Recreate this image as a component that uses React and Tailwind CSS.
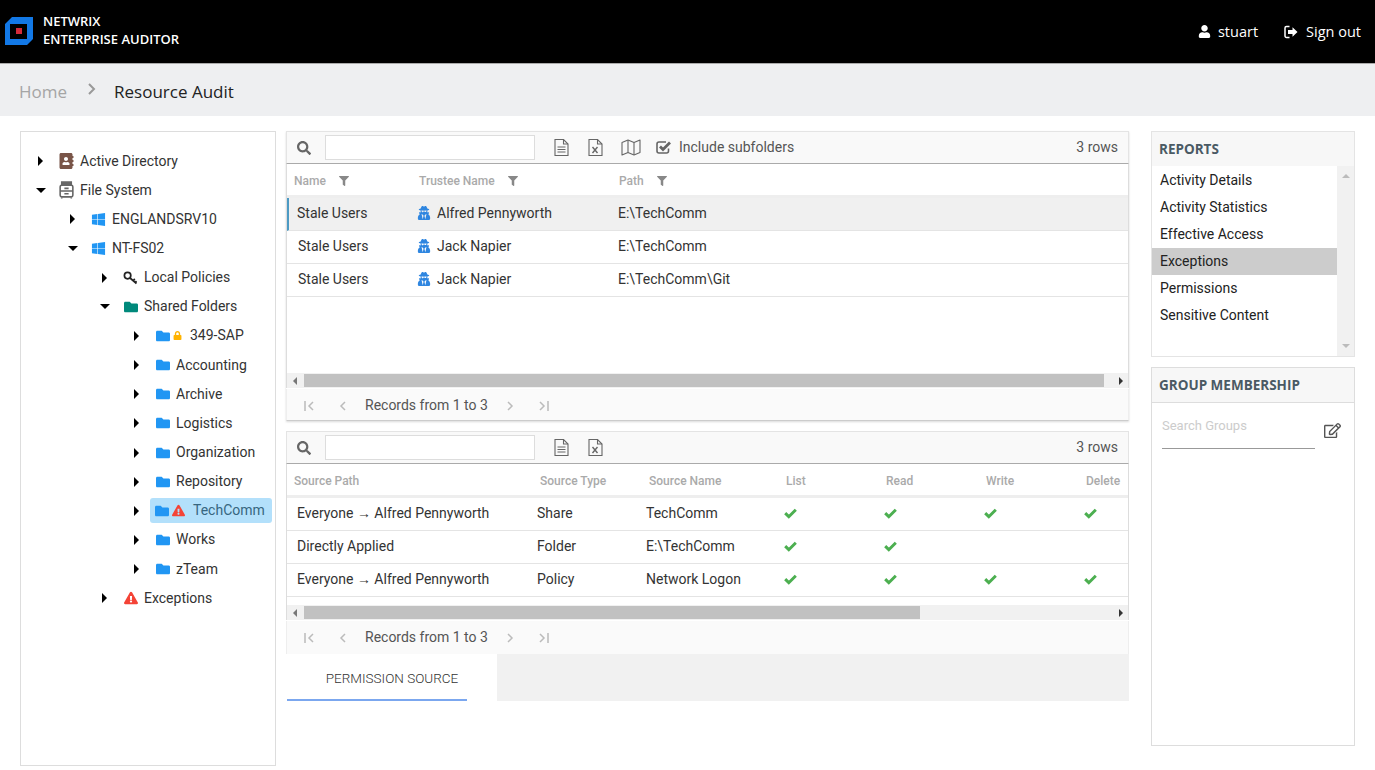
import React from 'react';
import {
  FaUser, FaFolder, FaWindows, FaExclamationTriangle, FaLock, FaSearch, FaFilter,
  FaRegEdit, FaAddressBook, FaUserSecret,
} from 'react-icons/fa';

// Tree data: level drives the indent
const TREE = [
  { label: 'Active Directory', level: 0, icon: 'book' },
  { label: 'File System', level: 0, icon: 'cabinet', open: true },
  { label: 'ENGLANDSRV10', level: 1, icon: 'windows' },
  { label: 'NT-FS02', level: 1, icon: 'windows', open: true },
  { label: 'Local Policies', level: 2, icon: 'key' },
  { label: 'Shared Folders', level: 2, icon: 'teal', open: true },
  { label: '349-SAP', level: 3, icon: 'folder', badge: 'lock' },
  { label: 'Accounting', level: 3, icon: 'folder' },
  { label: 'Archive', level: 3, icon: 'folder' },
  { label: 'Logistics', level: 3, icon: 'folder' },
  { label: 'Organization', level: 3, icon: 'folder' },
  { label: 'Repository', level: 3, icon: 'folder' },
  { label: 'TechComm', level: 3, icon: 'folder', badge: 'warn', selected: true },
  { label: 'Works', level: 3, icon: 'folder' },
  { label: 'zTeam', level: 3, icon: 'folder' },
  { label: 'Exceptions', level: 2, icon: 'warn' },
];

const INDENT = ['pl-[15px]', 'pl-[47px]', 'pl-[79px]', 'pl-[111px]'];

const TRUSTEES = [
  { name: 'Stale Users', trustee: 'Alfred Pennyworth', path: 'E:\\TechComm', active: true },
  { name: 'Stale Users', trustee: 'Jack Napier', path: 'E:\\TechComm' },
  { name: 'Stale Users', trustee: 'Jack Napier', path: 'E:\\TechComm\\Git' },
];

const SOURCES = [
  { path: 'Everyone → Alfred Pennyworth', type: 'Share', name: 'TechComm', perms: [1, 1, 1, 1] },
  { path: 'Directly Applied', type: 'Folder', name: 'E:\\TechComm', perms: [1, 1, 0, 0] },
  { path: 'Everyone → Alfred Pennyworth', type: 'Policy', name: 'Network Logon', perms: [1, 1, 1, 1] },
];

const REPORTS = ['Activity Details', 'Activity Statistics', 'Effective Access', 'Exceptions', 'Permissions', 'Sensitive Content'];

const Logo = () => (
  <svg width="28" height="28" viewBox="0 0 28 28" className="shrink-0">
    <path d="M7 0H28V22L22 28H0V7ZM5 7V22H22V7Z" fill="#1278e6" fillRule="evenodd" />
    <rect x="11" y="11" width="6" height="6" fill="#d52b3a" />
  </svg>
);

const SignOutIcon = () => (
  <svg width="14" height="14" viewBox="0 0 14 14">
    <path d="M5.5 1.5H2.5a1.5 1.5 0 0 0-1.5 1.5v8a1.5 1.5 0 0 0 1.5 1.5h3" fill="none" stroke="#fff" strokeWidth="1.5" />
    <path d="M4 5h4.5V2.2L13.5 7l-5 4.8V9H4z" fill="#fff" />
  </svg>
);

const CabinetIcon = () => (
  <svg width="15" height="18" viewBox="0 0 14 17" fill="none" stroke="#666" strokeWidth="1.5">
    <path d="M2.5 1h9v3h-9z" fill="#666" />
    <rect x="1" y="4" width="12" height="11" rx="1.5" />
    <path d="M1 9.5h12M5 7h4M5 12h4" />
    <path d="M2.5 15.5v1M11.5 15.5v1" />
  </svg>
);

const KeyIcon = () => (
  <svg width="15" height="14" viewBox="0 0 15 14" fill="none" stroke="#222" strokeWidth="1.7">
    <circle cx="4.6" cy="4.6" r="3.2" />
    <path d="M7 7l6.5 5.5M10.2 9.6l1.6-1.7M12.3 11.3l1.2-1.2" />
  </svg>
);

const CheckIcon = () => (
  <svg width="13" height="11" viewBox="0 0 13 11" fill="none" stroke="#4caf50" strokeWidth="3">
    <path d="M1.2 5.2l3.6 3.5L11.8 1.8" />
  </svg>
);

const TreeIcon = ({ type }) => {
  if (type === 'book') return <FaAddressBook className="text-[16px] text-[#795548]" />;
  if (type === 'cabinet') return <CabinetIcon />;
  if (type === 'windows') return <FaWindows className="text-[15px] text-[#2196f3]" />;
  if (type === 'key') return <KeyIcon />;
  if (type === 'teal') return <FaFolder className="text-[14px] text-[#00897b]" />;
  if (type === 'warn') return <FaExclamationTriangle className="text-[14px] text-[#f44336]" />;
  return <FaFolder className="text-[14px] text-[#2196f3]" />;
};

const TreeRow = ({ item }) => (
  <div className={`flex h-[29.15px] items-center ${INDENT[item.level]}`}>
    <span className="flex w-[9px] justify-center">
      {item.open ? (
        <span className="h-0 w-0 border-x-[5px] border-t-[5px] border-x-transparent border-t-black" />
      ) : (
        <span className="h-0 w-0 border-y-[5px] border-l-[5px] border-y-transparent border-l-black" />
      )}
    </span>
    {item.selected ? (
      <div className="ml-[9px] flex h-[25px] w-[122px] items-center rounded-[3px] bg-[#b3e0fb] pl-[5px]">
        <TreeIcon type={item.icon} />
        <FaExclamationTriangle className="ml-[3px] text-[13px] text-[#f44336]" />
        <span className="ml-[8px] text-[#37667f]">{item.label}</span>
      </div>
    ) : (
      <div className="ml-[14px] flex items-center">
        <span className="flex w-[15px] justify-center">
          <TreeIcon type={item.icon} />
        </span>
        {item.badge === 'lock' && <FaLock className="ml-[3px] text-[9px] text-[#ffb300]" />}
        <span className={item.badge === 'lock' ? 'ml-[8px]' : 'ml-[6px]'}>{item.label}</span>
      </div>
    )}
  </div>
);

const DocIcon = () => (
  <svg width="15" height="17" viewBox="0 0 15 17" fill="none" stroke="#666" strokeWidth="1.1">
    <path d="M1 .5h8.5L14 5v11.5H1z" />
    <path d="M9.5.5V5H14M3.5 8h8M3.5 10.5h8M3.5 13h8" />
  </svg>
);

const ExcelIcon = () => (
  <svg width="15" height="17" viewBox="0 0 15 17" fill="none" stroke="#666" strokeWidth="1.1">
    <path d="M1 .5h8.5L14 5v11.5H1z" />
    <path d="M9.5.5V5H14" />
    <path d="M4.5 8l5 6M9.5 8l-5 6" strokeWidth="1.4" />
  </svg>
);

const MapIcon = () => (
  <svg width="20" height="17" viewBox="0 0 20 17" fill="none" stroke="#666" strokeWidth="1.1" strokeLinejoin="round">
    <path d="M1 3.5L7 1l6 2.5L19 1v12.5L13 16l-6-2.5L1 16z" />
    <path d="M7 1v12.5M13 3.5V16" />
  </svg>
);

const CheckedBox = () => (
  <svg width="16" height="15" viewBox="0 0 16 15" fill="none">
    <path d="M12.5 8.5V11a2 2 0 0 1-2 2H3a2 2 0 0 1-2-2V4a2 2 0 0 1 2-2h7" stroke="#666" strokeWidth="1.6" />
    <path d="M4 6.5l3 3L14 2.5" stroke="#666" strokeWidth="2.8" />
  </svg>
);

const Toolbar = ({ children }) => (
  <div className="flex h-[33px] items-center border border-[#e4e4e4] border-b-[#aaa] bg-[#f9f9f9] pr-[10px] text-[#555]">
    <FaSearch className="ml-[10px] text-[14px] text-[#666]" />
    <div className="ml-[14px] h-[25px] w-[210px] border border-[#ddd] bg-white" />
    <span className="ml-[19px] flex"><DocIcon /></span>
    <span className="ml-[19px] flex"><ExcelIcon /></span>
    {children}
    <span className="ml-auto">3 rows</span>
  </div>
);

const Scrollbar = ({ thumb }) => (
  <div className="flex h-[15px] items-center bg-[#f1f1f1]">
    <span className="ml-[6px] h-0 w-0 border-y-[4px] border-r-[4px] border-y-transparent border-r-[#777]" />
    <div className={`ml-[7px] h-[13px] bg-[#c1c1c1] ${thumb}`} />
    <span className="ml-auto mr-[5px] h-0 w-0 border-y-[4px] border-l-[4px] border-y-transparent border-l-[#333]" />
  </div>
);

const Chev = ({ d }) => (
  <svg width="12" height="10" viewBox="0 0 12 10" fill="none" stroke="#bbb" strokeWidth="1.5">
    <path d={d} />
  </svg>
);

const Pager = ({ className }) => (
  <div className={`mt-[1px] flex items-center border-x border-[#eee] bg-[#fafafa] pl-[16px] text-[#555] ${className}`}>
    <Chev d="M2 0v10M10 1L6 5l4 4" />
    <span className="ml-[22px] flex"><Chev d="M8 1L4 5l4 4" /></span>
    <span className="ml-[16px]">Records from 1 to 3</span>
    <span className="ml-[16px] flex"><Chev d="M4 1l4 4-4 4" /></span>
    <span className="ml-[22px] flex"><Chev d="M2 1l4 4-4 4M10 0v10" /></span>
  </div>
);

const PanelHeader = ({ children, className }) => (
  <div className={`flex items-center bg-[#f7f7f7] pl-[7px] font-['Open_Sans',sans-serif] text-[13.5px] font-bold text-[#4a5a64] ${className}`}>
    {children}
  </div>
);

export default function App() {
  return (
    <div className="h-[770px] w-[1375px] overflow-hidden bg-white font-['Roboto',sans-serif] text-[14px] text-[#333]">
      {/* Header */}
      <header className="flex h-[64px] items-center justify-between border-b border-[#aaa] bg-black pl-[5px] pr-[14px] font-['Open_Sans',sans-serif] text-white">
        <div className="flex items-center pb-[2px]">
          <Logo />
          <div className="-mt-[2px] ml-[10px] text-[13px] font-semibold leading-[18px]">
            <div>NETWRIX</div>
            <div>ENTERPRISE AUDITOR</div>
          </div>
        </div>
        <div className="flex items-center text-[14.5px]">
          <FaUser className="text-[13px]" />
          <span className="ml-[7px]">stuart</span>
          <span className="ml-[26px] flex"><SignOutIcon /></span>
          <span className="ml-[8px]">Sign out</span>
        </div>
      </header>

      {/* Breadcrumb */}
      <div className="flex h-[52px] items-center bg-[#eeeff1] pl-[19px] pt-[3px] font-['Open_Sans',sans-serif] text-[17px]">
        <span className="text-[#a5a5a5]">Home</span>
        <svg width="10" height="14" viewBox="0 0 10 14" fill="none" stroke="#999" strokeWidth="2" className="ml-[20px] -mt-[6px]">
          <path d="M2 2l5 5-5 5" />
        </svg>
        <span className="ml-[17px] text-[#222]">Resource Audit</span>
      </div>

      <div className="flex items-start pl-[20px] pt-[15px]">
        {/* Tree */}
        <aside className="h-[635px] w-[256px] shrink-0 border border-[#ddd] pt-[14.57px]">
          {TREE.map((item) => (
            <TreeRow key={item.label} item={item} />
          ))}
        </aside>

        {/* Center */}
        <main className="ml-[10px] w-[843px] shrink-0">
          <div className="shadow-[0_1px_2px_rgba(0,0,0,0.15)]">
            <Toolbar>
              <span className="ml-[18px] flex"><MapIcon /></span>
              <span className="ml-[15px] flex"><CheckedBox /></span>
              <span className="ml-[7px]">Include subfolders</span>
            </Toolbar>
            <div className="border-x border-[#ddd]">
              <div className="grid h-[34px] grid-cols-[125px_200px_1fr] items-center border-b-[3px] border-[#eee] pt-[3px] text-[12px] font-medium text-[#aaa]">
                <div className="flex items-center pl-[7px]">Name<FaFilter className="ml-[13px] text-[10px] text-[#888]" /></div>
                <div className="flex items-center pl-[7px]">Trustee Name<FaFilter className="ml-[13px] text-[10px] text-[#888]" /></div>
                <div className="flex items-center pl-[7px]">Path<FaFilter className="ml-[13px] text-[10px] text-[#888]" /></div>
              </div>
              {TRUSTEES.map((row, i) => (
                <div
                  key={i}
                  className={`grid h-[33px] grid-cols-[125px_200px_1fr] items-center border-b border-[#e4e4e4] pb-[2px] ${row.active ? 'border-l-2 border-l-[#4c9ac4] bg-[#f0f0f0] pl-[8px]' : 'pl-[10px]'}`}
                >
                  <span className={row.active ? '' : 'pl-[1px]'}>{row.name}</span>
                  <span className="-ml-[5px] flex items-center">
                    <FaUserSecret className="text-[14px] text-[#2f86e0]" />
                    <span className="ml-[6px]">{row.trustee}</span>
                  </span>
                  <span className="-ml-[4px]">{row.path}</span>
                </div>
              ))}
              <div className="h-[76px]" />
              <Scrollbar thumb="w-[800px]" />
            </div>
            <Pager className="h-[32px] border-b border-b-[#ccc] pt-[2px]" />
          </div>

          <div className="mt-[10px]">
            <Toolbar />
            <div className="border-x border-[#ddd]">
              <div className="grid h-[34px] grid-cols-[246px_109px_137px_100px_100px_100px_1fr] items-center border-b-[3px] border-[#eee] pl-[7px] pt-[3px] text-[12px] font-medium text-[#aaa]">
                <span>Source Path</span>
                <span>Source Type</span>
                <span>Source Name</span>
                <span>List</span>
                <span>Read</span>
                <span>Write</span>
                <span>Delete</span>
              </div>
              {SOURCES.map((row) => (
                <div key={row.type} className="grid h-[33px] grid-cols-[240px_109px_138px_100px_100px_100px_1fr] items-center border-b border-[#e4e4e4] pb-[2px] pl-[10px]">
                  <span>{row.path}</span>
                  <span>{row.type}</span>
                  <span>{row.name}</span>
                  {row.perms.map((on, i) => (
                    <span key={i} className="flex">
                      {on ? <CheckIcon /> : null}
                    </span>
                  ))}
                </div>
              ))}
              <div className="h-[8px]" />
              <Scrollbar thumb="w-[616px]" />
            </div>
            <Pager className="h-[33px]" />
          </div>

          {/* Tabs */}
          <div className="ml-[1px] flex h-[47px] bg-[#f1f1f1]">
            <div className="flex w-[210px] flex-col bg-white">
              <div className="flex flex-1 items-center justify-center pt-[3px] text-[13.5px] font-light text-[#333]">PERMISSION SOURCE</div>
              <div className="h-[2px] w-[180px] bg-[#7ba7ef]" />
            </div>
          </div>
        </main>

        {/* Right */}
        <aside className="ml-[22px] w-[204px] shrink-0">
          <div className="h-[226px] border border-[#e4e4e4]">
            <PanelHeader className="h-[34px]">REPORTS</PanelHeader>
            <div className="flex h-[190px]">
              <div className="flex-1 pt-[1px]">
                {REPORTS.map((name) => (
                  <div key={name} className={`flex h-[27px] items-center pl-[8px] text-[#222] ${name === 'Exceptions' ? 'bg-[#ccc]' : ''}`}>
                    {name}
                  </div>
                ))}
              </div>
              <div className="flex w-[17px] flex-col items-center justify-between bg-[#f1f1f1] py-[8px]">
                <span className="h-0 w-0 border-x-[4px] border-b-[4px] border-x-transparent border-b-[#bbb]" />
                <span className="h-0 w-0 border-x-[4px] border-t-[4px] border-x-transparent border-t-[#bbb]" />
              </div>
            </div>
          </div>
          <div className="mt-[10px] h-[379px] border border-[#ddd]">
            <PanelHeader className="h-[35px] border-b border-[#ddd]">GROUP MEMBERSHIP</PanelHeader>
            <div className="flex items-start pl-[10px] pt-[13px]">
              <div className="h-[33px] w-[153px] border-b border-[#999] text-[13px] leading-[20px] text-[#ccc]">Search Groups</div>
              <FaRegEdit className="ml-[9px] mt-[6px] text-[17px] text-[#555]" />
            </div>
          </div>
        </aside>
      </div>
    </div>
  );
}
